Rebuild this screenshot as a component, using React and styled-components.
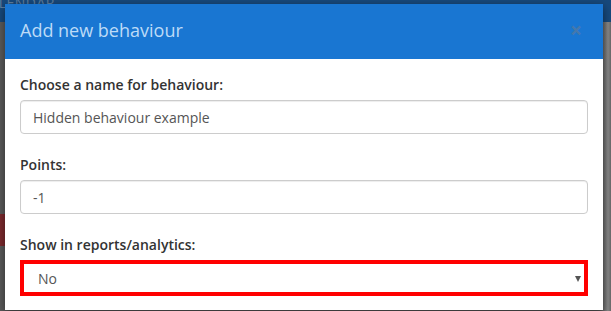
import React from "react";
import styled, { createGlobalStyle } from "styled-components";

const GlobalStyle = createGlobalStyle`
  html, body {
    margin: 0;
    padding: 0;
    width: 611px;
    height: 311px;
    overflow: hidden;
    background: #5b5b5b;
    font-family: "Open Sans", "Liberation Sans", sans-serif;
  }
  * {
    box-sizing: border-box;
  }
`;

const Page = styled.div`
  position: relative;
  width: 611px;
  height: 311px;
  overflow: hidden;
  background: linear-gradient(to right, #5b5b5b 0, #5b5b5b 600px, #6e6e6e 604px, #8a8a8a 608px, #6a6a6a 611px);
`;

const NavBar = styled.div`
  height: 22px;
  background: #17497c;
  display: flex;
  align-items: flex-end;
`;

const NavText = styled.span`
  font-size: 14px;
  color: #5f7f9f;
  letter-spacing: 0.5px;
  margin-left: -20px;
  line-height: 1;
  transform: translateY(-12px);
`;

const SideBlock = styled.div`
  margin-top: 192px;
  width: 5px;
  height: 32px;
  background: #7d2a2e;
`;

const Modal = styled.div`
  position: absolute;
  left: 5px;
  top: 4px;
  width: 598px;
  background: #fff;
  box-shadow: 0 3px 9px rgba(0, 0, 0, 0.5);
`;

const Header = styled.div`
  height: 55px;
  background: #1976d2;
  display: flex;
  align-items: center;
  justify-content: space-between;
  padding: 0 15px;
`;

const Title = styled.h4`
  margin: 0;
  font-size: 18px;
  font-weight: 400;
  color: #bddbf7;
  line-height: 1.4;
  padding-bottom: 2px;
`;

const Close = styled.span`
  font-size: 21px;
  font-weight: 700;
  line-height: 1;
  color: #4478ad;
  margin-right: 6px;
  padding-bottom: 2px;
`;

const Body = styled.div`
  padding: 16px 15px 14px;
  display: flex;
  flex-direction: column;
  gap: 21px;
`;

const Group = styled.div`
  display: flex;
  flex-direction: column;
  gap: 5px;
`;

const Label = styled.label`
  font-size: 14px;
  font-weight: 600;
  line-height: 20px;
  color: #333;
`;

const Input = styled.input`
  height: 34px;
  width: 100%;
  padding: 6px 12px;
  font-family: inherit;
  font-size: 14px;
  color: #555;
  border: 1px solid #ccc;
  border-radius: 4px;
  background: #fff;
  box-shadow: inset 0 1px 1px rgba(0, 0, 0, 0.075);
  outline: none;
`;

const SelectWrap = styled.div`
  position: relative;
  &::after {
    content: "";
    position: absolute;
    right: 7px;
    top: 16px;
    border-left: 3.5px solid transparent;
    border-right: 3.5px solid transparent;
    border-top: 6px solid #555;
  }
`;

const Select = styled.select`
  appearance: none;
  -webkit-appearance: none;
  height: 36px;
  width: 100%;
  padding: 0 14px;
  font-family: inherit;
  font-size: 14px;
  color: #555;
  border: 4px solid #ff0000;
  border-radius: 0;
  background: #fff;
  outline: none;
`;

export default function App() {
  return (
    <>
      <GlobalStyle />
      <Page>
        <NavBar>
          <NavText>CALENDAR</NavText>
        </NavBar>
        <SideBlock />
        <Modal>
          <Header>
            <Title>Add new behaviour</Title>
            <Close>×</Close>
          </Header>
          <Body>
            <Group>
              <Label>Choose a name for behaviour:</Label>
              <Input defaultValue="Hidden behaviour example" />
            </Group>
            <Group>
              <Label>Points:</Label>
              <Input defaultValue="-1" />
            </Group>
            <Group>
              <Label>Show in reports/analytics:</Label>
              <SelectWrap>
                <Select defaultValue="no">
                  <option value="no">No</option>
                  <option value="yes">Yes</option>
                </Select>
              </SelectWrap>
            </Group>
          </Body>
        </Modal>
      </Page>
    </>
  );
}
